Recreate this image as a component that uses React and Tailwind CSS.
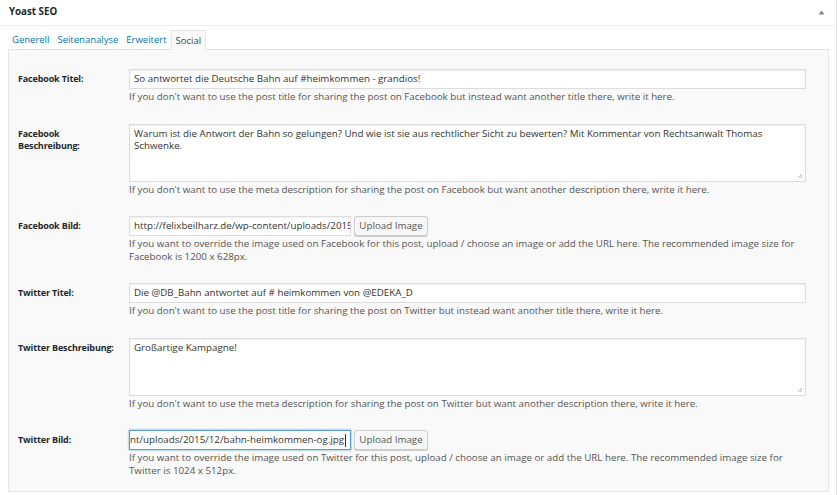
import React from 'react';

const rows = [
  {
    label: 'Facebook Titel:',
    type: 'input',
    value: 'So antwortet die Deutsche Bahn auf #heimkommen - grandios!',
    help: "If you don't want to use the post title for sharing the post on Facebook but instead want another title there, write it here.",
  },
  {
    label: 'Facebook Beschreibung:',
    type: 'textarea',
    value: 'Warum ist die Antwort der Bahn so gelungen? Und wie ist sie aus rechtlicher Sicht zu bewerten? Mit Kommentar von Rechtsanwalt Thomas Schwenke.',
    help: "If you don't want to use the meta description for sharing the post on Facebook but want another description there, write it here.",
  },
  {
    label: 'Facebook Bild:',
    type: 'image',
    value: 'http://felixbeilharz.de/wp-content/uploads/2015/12/bahn-heimkommen-og.jpg',
    help: 'If you want to override the image used on Facebook for this post, upload / choose an image or add the URL here. The recommended image size for Facebook is 1200 x 628px.',
  },
  {
    label: 'Twitter Titel:',
    type: 'input',
    value: 'Die @DB_Bahn antwortet auf # heimkommen von @EDEKA_D',
    help: "If you don't want to use the post title for sharing the post on Twitter but instead want another title there, write it here.",
  },
  {
    label: 'Twitter Beschreibung:',
    type: 'textarea',
    value: 'Großartige Kampagne!',
    help: "If you don't want to use the meta description for sharing the post on Twitter but want another description there, write it here.",
  },
  {
    label: 'Twitter Bild:',
    type: 'image',
    focused: true,
    value: 'http://felixbeilharz.de/wp-content/uploads/2015/12/bahn-heimkommen-og.jpg',
    help: 'If you want to override the image used on Twitter for this post, upload / choose an image or add the URL here. The recommended image size for Twitter is 1024 x 512px.',
  },
];

const Field = ({ row }) => {
  if (row.type === 'textarea') {
    return (
      <div className="relative h-[58px] border border-[#dddddd] bg-white px-[4px] py-[3px] text-[#333] shadow-[inset_0_1px_2px_rgba(0,0,0,0.07)]">
        {row.value}
        <svg className="absolute bottom-[2px] right-[2px]" width="6" height="6" viewBox="0 0 6 6">
          <path d="M5 1 L1 5 M5 3 L3 5" stroke="#aaa" strokeWidth="0.8" />
        </svg>
      </div>
    );
  }
  if (row.type === 'image') {
    return (
      <div className="flex items-center gap-[3px]">
        <div
          className={
            'flex h-[20px] w-[222px] items-center overflow-hidden whitespace-nowrap bg-white px-[4px] text-[#333] ' +
            (row.focused
              ? 'justify-end border border-[#5b9dd9] shadow-[0_0_2px_rgba(30,140,190,0.8)]'
              : 'border border-[#dddddd] shadow-[inset_0_1px_2px_rgba(0,0,0,0.07)]')
          }
        >
          <span className="shrink-0">{row.value}</span>
          {row.focused && <span className="ml-[1px] inline-block h-[13px] w-px shrink-0 bg-[#333]" />}
        </div>
        <button className="h-[20px] w-[74px] rounded-[3px] border border-[#cccccc] bg-[#f7f7f7] text-[#555] shadow-[0_1px_0_#ccc]">
          Upload Image
        </button>
      </div>
    );
  }
  return (
    <div className="flex h-[20px] items-center border border-[#dddddd] bg-white px-[4px] text-[#333] shadow-[inset_0_1px_2px_rgba(0,0,0,0.07)]">
      {row.value}
    </div>
  );
};

export default function App() {
  return (
    <div
      className="h-[495px] w-[839px] bg-white text-[9.75px] leading-[12.5px] text-[#444]"
      style={{ fontFamily: '"Open Sans", "Noto Sans", sans-serif' }}
    >
      <div className="w-[837px] border-r border-[#e5e5e5] bg-white pb-[5px]">
        <div className="flex h-[26px] items-center justify-between border-b border-[#eeeeee] pl-[9px] pr-[11px]">
          <span className="font-bold text-[#23282d]">Yoast SEO</span>
          <svg width="7" height="5" viewBox="0 0 7 5">
            <path d="M0.5 4.5 L3.5 0.5 L6.5 4.5 Z" fill="#888" />
          </svg>
        </div>
        <div className="flex items-end gap-[8px] pl-[12px] pt-[4px] text-[9.5px]">
          <span className="pb-[3px] text-[#0073aa]">Generell</span>
          <span className="pb-[3px] text-[#0073aa]">Seitenanalyse</span>
          <span className="pb-[3px] text-[#0073aa]">Erweitert</span>
          <span className="relative -mb-px -ml-[4px] flex h-[20px] items-center border border-b-0 border-[#e5e5e5] bg-[#f9f9f9] px-[4px] pt-[1px] text-[#444]">
            Social
          </span>
        </div>
        <div className="ml-[8px] mr-[7px] border border-[#e5e5e5] bg-[#f9f9f9] pb-[4px] pl-[9px] pr-[22px] pt-[9px]">
          {rows.map((row) => (
            <div key={row.label} className="flex py-[10px]">
              <div className="w-[111px] shrink-0 pr-[10px] pt-[4px] text-[9px] font-bold tracking-[-0.15px] text-[#23282d]">
                {row.label}
              </div>
              <div className="flex-1">
                <Field row={row} />
                <div className="mt-[2px] text-[#555]">{row.help}</div>
              </div>
            </div>
          ))}
        </div>
      </div>
    </div>
  );
}
